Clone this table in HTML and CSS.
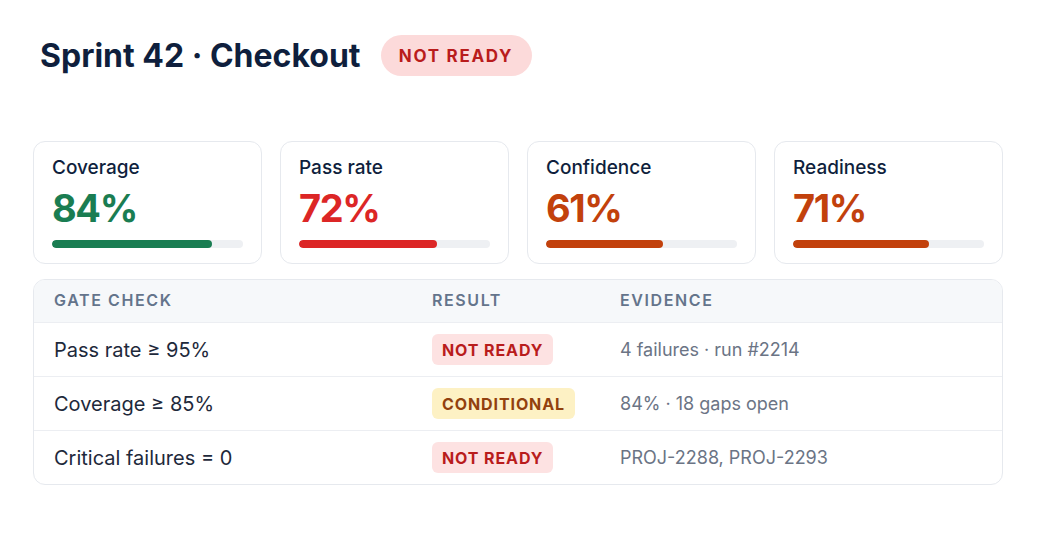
FILE: index.html
```html
<!DOCTYPE html>
<html>
<head>
<meta charset="utf-8">
<link rel="stylesheet" href="styles.css">
</head>
<body>
<div class="page">
  <header class="head">
    <h1 class="title">Sprint 42 · Checkout</h1>
    <span class="pill">NOT READY</span>
  </header>

  <section class="metrics">
    <div class="card">
      <div class="label">Coverage</div>
      <div class="value green">84%</div>
      <div class="track"><div class="fill bg-green" style="width:84%"></div></div>
    </div>
    <div class="card">
      <div class="label">Pass rate</div>
      <div class="value red">72%</div>
      <div class="track"><div class="fill bg-red" style="width:72%"></div></div>
    </div>
    <div class="card">
      <div class="label">Confidence</div>
      <div class="value orange">61%</div>
      <div class="track"><div class="fill bg-orange" style="width:61%"></div></div>
    </div>
    <div class="card">
      <div class="label">Readiness</div>
      <div class="value orange">71%</div>
      <div class="track"><div class="fill bg-orange" style="width:71%"></div></div>
    </div>
  </section>

  <section class="table">
    <div class="row thead">
      <div>GATE CHECK</div>
      <div>RESULT</div>
      <div>EVIDENCE</div>
    </div>
    <div class="row">
      <div class="check">Pass rate ≥ 95%</div>
      <div><span class="tag tag-red">NOT READY</span></div>
      <div class="evidence">4 failures · run #2214</div>
    </div>
    <div class="row">
      <div class="check">Coverage ≥ 85%</div>
      <div><span class="tag tag-yellow">CONDITIONAL</span></div>
      <div class="evidence">84% · 18 gaps open</div>
    </div>
    <div class="row">
      <div class="check">Critical failures = 0</div>
      <div><span class="tag tag-red">NOT READY</span></div>
      <div class="evidence">PROJ-2288, PROJ-2293</div>
    </div>
  </section>
</div>
</body>
</html>
```

FILE: styles.css
```css
* { box-sizing: border-box; }
html, body { margin: 0; padding: 0; background: #ffffff; }
body {
  font-family: Inter, "Noto Sans", "Liberation Sans", sans-serif;
  color: #0f1f3d;
}
.page {
  width: 1040px;
  height: 538px;
  padding: 35px 37px 0 33px;
}
.head {
  display: flex;
  align-items: center;
  gap: 20px;
  height: 41px;
  padding-left: 7px;
}
.title {
  margin: 0;
  font-size: 32px;
  font-weight: 700;
  color: #0f1f3d;
}
.pill {
  display: inline-flex;
  align-items: center;
  justify-content: center;
  height: 41px;
  width: 151px;
  border-radius: 21px;
  background: #fcdada;
  color: #b91c1c;
  font-size: 17px;
  font-weight: 700;
  letter-spacing: 1.7px;
}
.metrics {
  display: grid;
  grid-template-columns: repeat(4, 229px);
  gap: 18px;
  margin-top: 65px;
}
.card {
  height: 123px;
  border: 1.5px solid #e6e9ee;
  border-radius: 12px;
  padding: 15px 18px 0 18px;
}
.label {
  font-size: 19px;
  font-weight: 500;
  line-height: 22px;
  color: #0f1f3d;
}
.value {
  font-size: 38px;
  font-weight: 700;
  letter-spacing: -1.4px;
  line-height: 46px;
  margin-top: 6px;
}
.green { color: #1a7d52; }
.red { color: #dc2626; }
.orange { color: #c2410c; }
.track {
  margin-top: 9px;
  height: 8px;
  border-radius: 4px;
  background: #eef0f3;
  overflow: hidden;
}
.fill { height: 100%; border-radius: 4px; }
.bg-green { background: #1a7d52; }
.bg-red { background: #dc2626; }
.bg-orange { background: #c2410c; }

.table {
  margin-top: 15px;
  width: 970px;
  border: 1.5px solid #e6e9ee;
  border-radius: 12px;
  overflow: hidden;
}
.row {
  display: grid;
  grid-template-columns: 378px 188px 1fr;
  align-items: center;
  height: 54px;
  padding-left: 20px;
  border-top: 1.5px solid #eceef2;
}
.thead {
  height: 42px;
  padding-bottom: 2px;
  border-top: none;
  background: #f6f8fa;
  font-size: 16px;
  font-weight: 600;
  letter-spacing: 1.6px;
  color: #64748b;
}
.check {
  font-size: 20px;
  color: #1e293b;
}
.evidence {
  font-size: 18px;
  color: #6b7485;
}
.tag {
  display: inline-flex;
  align-items: center;
  height: 31px;
  padding: 0 10px;
  border-radius: 6px;
  font-size: 16px;
  font-weight: 700;
  letter-spacing: 0.9px;
}
.tag-red { background: #fde2e2; color: #b91c1c; }
.tag-yellow { background: #fdf1c4; color: #92400e; }
```
